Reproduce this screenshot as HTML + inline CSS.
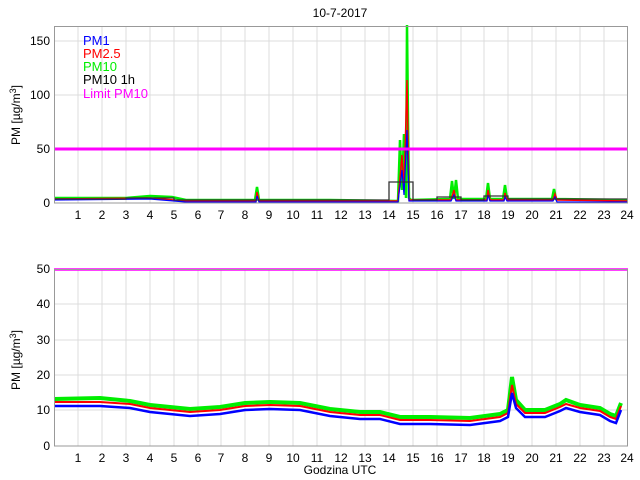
<!DOCTYPE html>
<html><head><meta charset="utf-8"><style>
body{margin:0;background:#fff;}
svg{display:block;font-family:"Liberation Sans",Arial,sans-serif;}
</style></head><body>
<svg width="640" height="480" viewBox="0 0 640 480" xmlns="http://www.w3.org/2000/svg">
<rect width="640" height="480" fill="#fff"/>
<text x="340" y="17" font-size="12" text-anchor="middle">10-7-2017</text>
<g stroke="#dcdcdc" stroke-width="1">
<path d="M78 26V203M102 26V203M126 26V203M150 26V203M174 26V203M198 26V203M221 26V203M245 26V203M269 26V203M293 26V203M317 26V203M341 26V203M365 26V203M389 26V203M413 26V203M437 26V203M461 26V203M484 26V203M508 26V203M532 26V203M556 26V203M580 26V203M604 26V203"/>
<path d="M54 41H628M54 95H628M54 149H628"/>
<path d="M78 269V446M102 269V446M126 269V446M150 269V446M174 269V446M198 269V446M221 269V446M245 269V446M269 269V446M293 269V446M317 269V446M341 269V446M365 269V446M389 269V446M413 269V446M437 269V446M461 269V446M484 269V446M508 269V446M532 269V446M556 269V446M580 269V446M604 269V446"/>
<path d="M54 304H628M54 340H628M54 375H628M54 410H628"/>
</g>
<polyline fill="none" stroke="#00ee00" stroke-width="2.5" points="54,198 100,198 126,198 150,196 172,197 186,200 255,200 257,187 259,200 330,200 398,201 400,140 402,190 404,134 406,198 407,25 408,120 409,198 411,200 450,199 452,181 454,199 456,180 458,199 486,199 488,183 490,199 503,199 505,185 507,199 552,199 554,189 556,199 628,200"/>
<polyline fill="none" stroke="#ff0000" stroke-width="1.5" points="54,199 150,198 186,201 256,201 257,192 259,201 398,201 402,155 404,190 407,80 409,200 451,200 454,190 456,200 487,200 488,190 490,200 504,200 505,193 507,200 553,200 555,194 557,200 628,201"/>
<polyline fill="none" stroke="#0000ff" stroke-width="1.2" points="54,200 150,199 186,202 256,202 257,196 259,202 398,202 402,170 404,195 407,130 409,201 451,201 454,195 456,201 487,201 488,195 490,201 504,201 505,197 507,201 553,201 555,197 557,202 628,202"/>
<polyline fill="none" stroke="#333" stroke-width="1.3" points="54,199 126,199 126,198 174,198 174,200 389,200 389,182 413,182 413,200 437,200 437,197 461,197 461,200 484,200 484,196 508,196 508,199 628,199"/>
<path d="M54 149H628" stroke="#ff00ff" stroke-width="3"/>
<rect x="54.5" y="26.5" width="573" height="176.5" fill="none" stroke="#999"/>
<g font-size="12" text-anchor="end"><text x="50" y="45">150</text><text x="50" y="99">100</text><text x="50" y="153">50</text><text x="50" y="207">0</text></g>
<g font-size="13">
<text x="83" y="45" fill="#0000ff">PM1</text>
<text x="83" y="58" fill="#ff0000">PM2.5</text>
<text x="83" y="71" fill="#00ee00">PM10</text>
<text x="83" y="84" fill="#000">PM10 1h</text>
<text x="83" y="98" fill="#ff00ff">Limit PM10</text>
</g>
<text transform="translate(20,115) rotate(-90)" font-size="12" text-anchor="middle">PM [µg/m<tspan dy="-4" font-size="9">3</tspan><tspan dy="4">]</tspan></text>
<g font-size="12" text-anchor="middle">
<text x="78" y="219">1</text><text x="102" y="219">2</text><text x="126" y="219">3</text><text x="150" y="219">4</text><text x="174" y="219">5</text><text x="198" y="219">6</text><text x="221" y="219">7</text><text x="245" y="219">8</text><text x="269" y="219">9</text><text x="293" y="219">10</text><text x="317" y="219">11</text><text x="341" y="219">12</text><text x="365" y="219">13</text><text x="389" y="219">14</text><text x="413" y="219">15</text><text x="437" y="219">16</text><text x="461" y="219">17</text><text x="484" y="219">18</text><text x="508" y="219">19</text><text x="532" y="219">20</text><text x="556" y="219">21</text><text x="580" y="219">22</text><text x="604" y="219">23</text><text x="627" y="219">24</text>
</g>
<polyline fill="none" stroke="#00ee00" stroke-width="4" points="54,399 100,398 130,401 150,405 190,409 220,407 245,403 270,402 300,403 330,409 360,412 380,412 400,417 430,417 470,418 500,414 508,410 512,377 516,400 525,410 545,410 560,404 566,400 580,405 600,408 610,414 616,416 621,403"/>
<polyline fill="none" stroke="#ff0000" stroke-width="2" points="54,402 100,402 130,404 150,408 190,412 220,410 245,406 270,405 300,406 330,412 360,415 380,415 400,420 430,420 470,421 500,417 508,413 512,385 516,404 525,413 545,413 560,407 566,404 580,408 600,411 610,417 616,419 621,406"/>
<polyline fill="none" stroke="#0000ff" stroke-width="2.5" points="54,406 100,406 130,408 150,412 190,416 220,414 245,410 270,409 300,410 330,416 360,419 380,419 400,424 430,424 470,425 500,421 508,417 512,393 516,408 525,417 545,417 560,411 566,408 580,412 600,415 610,421 616,423 621,410"/>
<path d="M54 269.5H628" stroke="#ff00ff" stroke-width="2.5"/>
<rect x="54.5" y="269.5" width="573" height="176.5" fill="none" stroke="#999"/>
<g font-size="12" text-anchor="end"><text x="50" y="273">50</text><text x="50" y="308">40</text><text x="50" y="344">30</text><text x="50" y="379">20</text><text x="50" y="414">10</text><text x="50" y="450">0</text></g>
<text transform="translate(20,360) rotate(-90)" font-size="12" text-anchor="middle">PM [µg/m<tspan dy="-4" font-size="9">3</tspan><tspan dy="4">]</tspan></text>
<g font-size="12" text-anchor="middle">
<text x="78" y="462">1</text><text x="102" y="462">2</text><text x="126" y="462">3</text><text x="150" y="462">4</text><text x="174" y="462">5</text><text x="198" y="462">6</text><text x="221" y="462">7</text><text x="245" y="462">8</text><text x="269" y="462">9</text><text x="293" y="462">10</text><text x="317" y="462">11</text><text x="341" y="462">12</text><text x="365" y="462">13</text><text x="389" y="462">14</text><text x="413" y="462">15</text><text x="437" y="462">16</text><text x="461" y="462">17</text><text x="484" y="462">18</text><text x="508" y="462">19</text><text x="532" y="462">20</text><text x="556" y="462">21</text><text x="580" y="462">22</text><text x="604" y="462">23</text><text x="627" y="462">24</text>
</g>
<text x="340" y="474" font-size="12" text-anchor="middle">Godzina UTC</text>
</svg>
</body></html>
